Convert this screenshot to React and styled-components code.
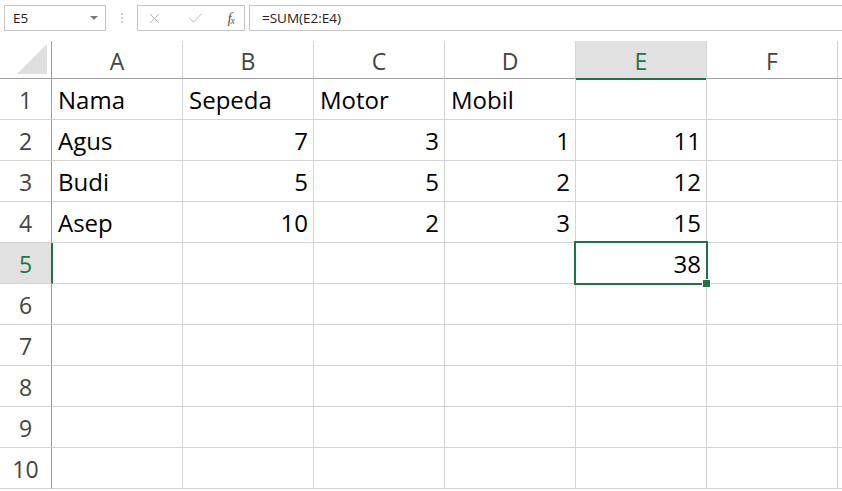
import React from 'react';
import styled, { createGlobalStyle } from 'styled-components';
import { X, Check } from 'lucide-react';

const GlobalStyle = createGlobalStyle`
    html, body {
        margin: 0;
        padding: 0;
        background: #fff;
        overflow: hidden;
    }
    * {
        box-sizing: border-box;
    }
`;

const Page = styled.div`
    width: 842px;
    height: 491px;
    overflow: hidden;
    background: #fff;
    font-family: 'Open Sans', 'Noto Sans', sans-serif;
`;

const Toolbar = styled.div`
    height: 41px;
    padding: 5px 0 0 4px;
    display: flex;
    align-items: flex-start;
`;

const NameBox = styled.div`
    width: 102px;
    height: 26px;
    padding: 0 8px;
    display: flex;
    align-items: center;
    justify-content: space-between;
    border: 1px solid #c6c6c6;
    font-size: 13.5px;
    color: #222;
`;

const DropArrow = styled.span`
    width: 0;
    height: 0;
    margin-right: -1px;
    border-left: 4px solid transparent;
    border-right: 4px solid transparent;
    border-top: 4px solid #7a7a7a;
`;

const DotsWrap = styled.div`
    width: 31px;
    height: 26px;
    display: flex;
    flex-direction: column;
    align-items: center;
    justify-content: center;
    gap: 2px;
`;

const Dot = styled.span`
    width: 2px;
    height: 2px;
    border-radius: 50%;
    background: #b9b9b9;
`;

const FxBox = styled.div`
    width: 108px;
    height: 26px;
    padding: 0 10px 0 8px;
    display: flex;
    align-items: center;
    justify-content: space-between;
    border: 1px solid #c6c6c6;
    color: #b0b0b0;
`;

const FxText = styled.span`
    font-family: 'Liberation Serif', 'DejaVu Serif', serif;
    font-style: italic;
    font-size: 15px;
    color: #555;
    letter-spacing: -1px;

    sub {
        font-size: 10px;
        vertical-align: -1px;
    }
`;

const FormulaBox = styled.div`
    flex: 1;
    height: 26px;
    margin-left: 4px;
    margin-right: -2px;
    padding: 0 12px;
    display: flex;
    align-items: center;
    border: 1px solid #c6c6c6;
    font-size: 13.5px;
    color: #222;
`;

const Grid = styled.div`
    display: grid;
    grid-template-columns: 52px repeat(7, 131px);
    grid-template-rows: 38px repeat(10, 41px);
`;

const Corner = styled.div`
    display: flex;
    align-items: flex-end;
    justify-content: flex-end;
    padding: 0 4px 4px 0;
    border-right: 1px solid #9f9f9f;
    border-bottom: 1px solid #9f9f9f;
`;

const ColHeader = styled.div`
    display: flex;
    align-items: center;
    justify-content: center;
    padding-top: 2px;
    font-size: 23px;
    color: ${(props) => (props.active ? '#217346' : '#444')};
    background: ${(props) => (props.active ? '#e1e1e1' : '#fff')};
    border-right: 1px solid #d4d4d4;
    border-bottom: ${(props) => (props.active ? '2px solid #217346' : '1px solid #9f9f9f')};
    margin-bottom: ${(props) => (props.active ? '-1px' : '0')};
`;

const RowHeader = styled.div`
    display: flex;
    align-items: center;
    justify-content: center;
    padding-top: 2px;
    font-size: 23px;
    color: ${(props) => (props.active ? '#217346' : '#444')};
    background: ${(props) => (props.active ? '#e1e1e1' : '#fff')};
    border-bottom: 1px solid #d4d4d4;
    border-right: ${(props) => (props.active ? '2px solid #217346' : '1px solid #9f9f9f')};
    margin-right: ${(props) => (props.active ? '-1px' : '0')};
    position: relative;
    z-index: 1;
`;

const Cell = styled.div`
    position: relative;
    display: flex;
    align-items: center;
    justify-content: ${(props) => (props.num ? 'flex-end' : 'flex-start')};
    padding: ${(props) => (props.num ? '2px 5px 0 0' : '2px 0 0 6px')};
    font-size: 24px;
    line-height: 38px;
    color: #000;
    white-space: nowrap;
    border-right: 1px solid #d4d4d4;
    border-bottom: 1px solid #d4d4d4;
`;

const Selection = styled.div`
    position: absolute;
    z-index: 2;
    left: -2px;
    top: -2px;
    right: -2px;
    bottom: -2px;
    border: 2px solid #217346;
    pointer-events: none;

    &::after {
        content: '';
        position: absolute;
        right: -5px;
        bottom: -5px;
        width: 7px;
        height: 7px;
        background: #217346;
        border: 1px solid #fff;
    }
`;

const columns = ['A', 'B', 'C', 'D', 'E', 'F', ''];

const rows = [
    ['Nama', 'Sepeda', 'Motor', 'Mobil', '', '', ''],
    ['Agus', 7, 3, 1, 11, '', ''],
    ['Budi', 5, 5, 2, 12, '', ''],
    ['Asep', 10, 2, 3, 15, '', ''],
    ['', '', '', '', 38, '', ''],
    ['', '', '', '', '', '', ''],
    ['', '', '', '', '', '', ''],
    ['', '', '', '', '', '', ''],
    ['', '', '', '', '', '', ''],
    ['', '', '', '', '', '', ''],
];

const App = () => {
    return (
        <Page>
            <GlobalStyle />
            <Toolbar>
                <NameBox>
                    <span>E5</span>
                    <DropArrow />
                </NameBox>
                <DotsWrap>
                    <Dot />
                    <Dot />
                    <Dot />
                </DotsWrap>
                <FxBox>
                    <X size={17} strokeWidth={1.3} />
                    <Check size={17} strokeWidth={1.3} />
                    <FxText>
                        f<sub>x</sub>
                    </FxText>
                </FxBox>
                <FormulaBox>=SUM(E2:E4)</FormulaBox>
            </Toolbar>
            <Grid>
                <Corner>
                    <svg width="30" height="30" viewBox="0 0 30 30">
                        <polygon points="30,0 30,30 0,30" fill="#dfdfdf" />
                    </svg>
                </Corner>
                {columns.map((col, i) => (
                    <ColHeader key={i} active={col === 'E'}>
                        {col}
                    </ColHeader>
                ))}
                {rows.map((row, r) => (
                    <React.Fragment key={r}>
                        <RowHeader active={r === 4}>{r + 1}</RowHeader>
                        {row.map((value, c) => (
                            <Cell key={c} num={typeof value === 'number'}>
                                {value}
                                {r === 4 && c === 4 && <Selection />}
                            </Cell>
                        ))}
                    </React.Fragment>
                ))}
            </Grid>
        </Page>
    );
};

export default App;
